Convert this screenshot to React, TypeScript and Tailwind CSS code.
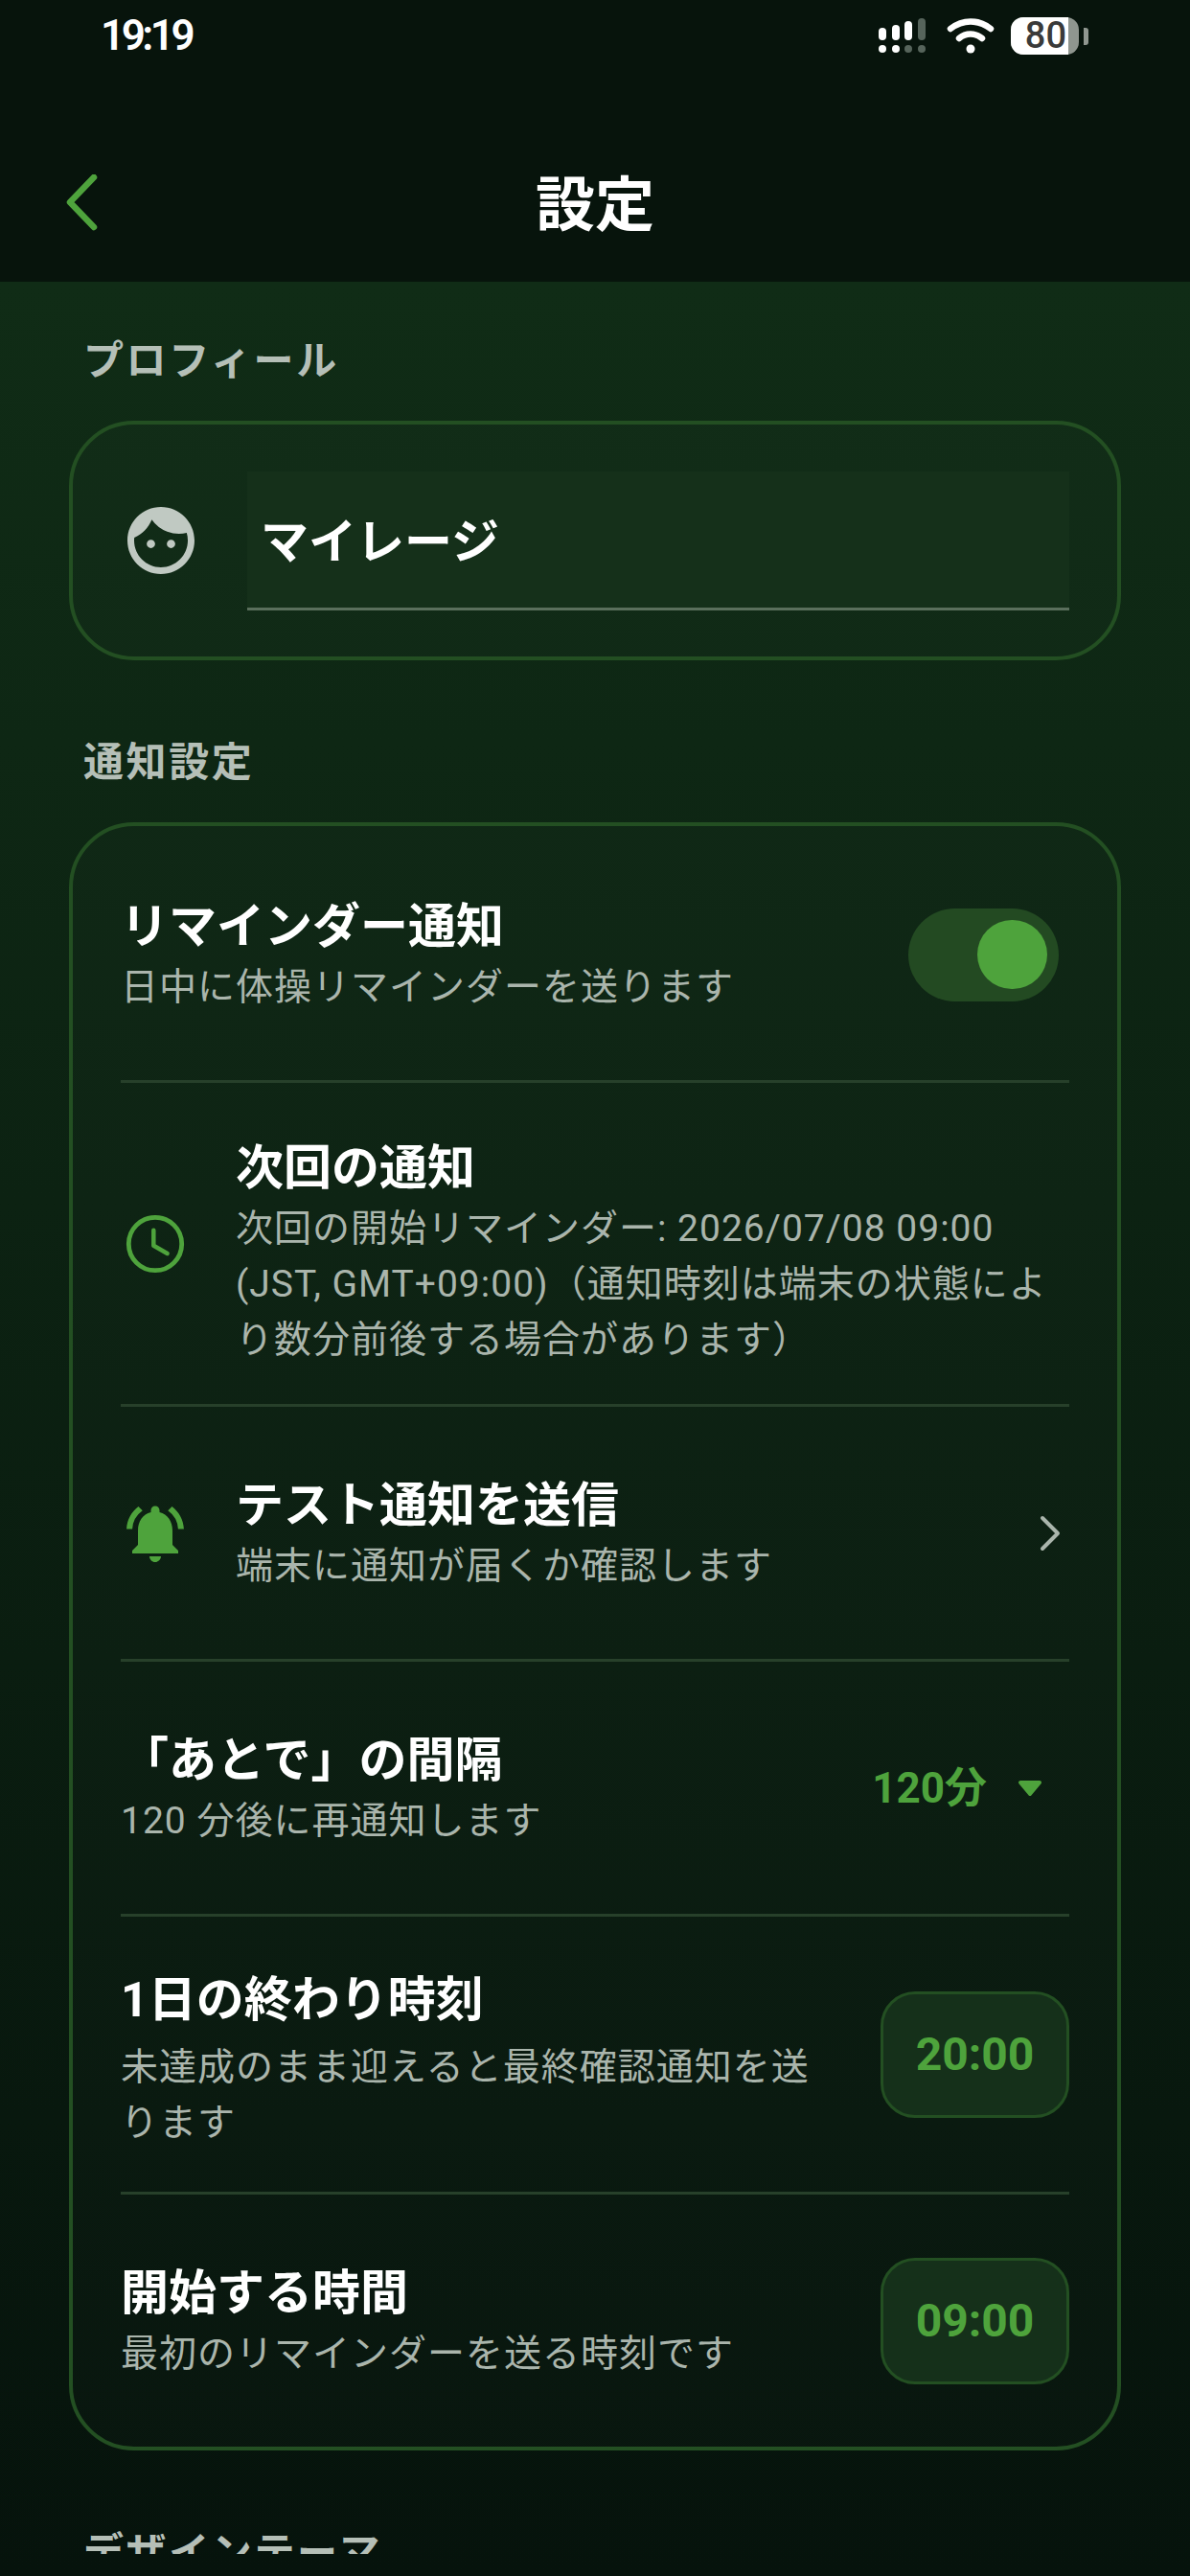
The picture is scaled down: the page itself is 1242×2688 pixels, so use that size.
import { MdFace, MdNotificationsActive } from "react-icons/md";

const green = "text-[#4ea33c]";

function SignalIcon() {
  const cols = [
    { x: 921, top: 30, on: true, dot: true },
    { x: 935, top: 27, on: true, dot: true },
    { x: 948, top: 23, on: true, dot: false },
    { x: 962, top: 20, on: false, dot: false },
  ];
  return (
    <svg width="50" height="38" viewBox="917 20 50 38">
      {cols.map((c) => (
        <g key={c.x}>
          <rect x={c.x - 4} y={c.top} width="8" height={43 - c.top} rx="4" fill={c.on ? "#fff" : "#56645b"} />
          <circle cx={c.x} cy="52" r="4" fill={c.dot ? "#fff" : "#56645b"} />
        </g>
      ))}
    </svg>
  );
}

function WifiIcon() {
  return (
    <svg width="50" height="38" viewBox="0 0 50 38" fill="none" stroke="#fff" strokeWidth="6.5" strokeLinecap="round">
      <path d="M4 11C17 1 33 1 46 11" />
      <path d="M13 21C20 15 30 15 37 21" />
      <circle cx="25" cy="32" r="4.5" fill="#fff" stroke="none" />
    </svg>
  );
}

function Battery() {
  return (
    <div className="flex items-center gap-[5px]">
      <div className="flex h-[39px] w-[71px] rounded-[13px] bg-[#8f968f]">
        <div className="flex w-[60px] items-center justify-end rounded-l-[13px] bg-white pr-[2px] text-[38px] leading-[39px] font-medium text-[#3a3a3a]">
          80
        </div>
      </div>
      <div className="h-[18px] w-[5px] rounded-r-[3px] bg-[#8f968f]" />
    </div>
  );
}

function StatusBar() {
  return (
    <div className="flex h-[130px] items-start justify-between pt-[18px] pr-[106px] pl-[105px] text-white">
      <span className="text-[44px] leading-[38px] font-semibold tracking-[-3.5px]">19:19</span>
      <div className="flex items-center">
        <SignalIcon />
        <div className="ml-[21px]">
          <WifiIcon />
        </div>
        <div className="ml-[17px]">
          <Battery />
        </div>
      </div>
    </div>
  );
}

function Header() {
  return (
    <header className="h-[294px] shrink-0 bg-[#07140c]">
      <StatusBar />
      <div className="flex h-[164px] items-center px-[68px]">
        <svg width="36" height="60" viewBox="0 0 36 60" fill="none" stroke="#4ea33c" strokeWidth="6.5" strokeLinecap="round" strokeLinejoin="round">
          <path d="M30 3L5 29L30 55" />
        </svg>
        <h1 className="flex-1 pt-[5px] text-center text-[62px] leading-[80px] font-bold text-white">設定</h1>
        <div className="w-[36px]" />
      </div>
    </header>
  );
}

function SectionLabel({ children }: { children: string }) {
  return (
    <h2 className="mb-[32px] px-[15px] text-[42px] leading-[60px] font-semibold tracking-[2.6px] text-[#b5bfb7]">
      {children}
    </h2>
  );
}

function Card({ children, className = "" }: { children: React.ReactNode; className?: string }) {
  return (
    <div className={`rounded-[68px] border-[4px] border-[#234f22] bg-white/[0.008] ${className}`}>
      {children}
    </div>
  );
}

function RowText({ title, sub, subClass = "" }: { title: string; sub: React.ReactNode; subClass?: string }) {
  return (
    <div className="min-w-0 flex-1">
      <div className="text-[50px] leading-[68px] font-bold text-white">{title}</div>
      <div className={`text-[39px] leading-[58px] tracking-[1px] text-[#aab5ac] ${subClass}`}>{sub}</div>
    </div>
  );
}

function Divider() {
  return <div className="h-[3px] bg-[#27402a]" />;
}

function TimeButton({ value }: { value: string }) {
  return (
    <button className="flex h-[132px] w-[197px] shrink-0 items-center justify-center rounded-[36px] border-[3px] border-[#234f22] bg-[#15301a] text-[48px] font-bold text-[#4ea33c]">
      {value}
    </button>
  );
}

function ClockIcon() {
  return (
    <svg width="72" height="72" viewBox="0 0 72 72" fill="none" stroke="#4ea33c" className="shrink-0">
      <circle cx="36" cy="36" r="27.7" strokeWidth="4.8" />
      <path d="M34.3 21.7V37.7L48.6 46" strokeWidth="4.5" strokeLinecap="round" strokeLinejoin="round" />
    </svg>
  );
}

export default function App() {
  return (
    <div className="flex h-[2688px] w-[1242px] flex-col overflow-hidden bg-[linear-gradient(180deg,#102c16_11%,#06130c_100%)] font-[Roboto,'Noto_Sans_CJK_JP',sans-serif]">
      <Header />
      <main className="h-[2371px] shrink-0 overflow-hidden px-[72px] pt-[53px]">
        <SectionLabel>プロフィール</SectionLabel>
        <Card className="mb-[77px] flex h-[250px] items-center px-[50px]">
          <MdFace size={84} className="shrink-0 text-[#c0c9c2]" />
          <div className="ml-[48px] flex h-[145px] flex-1 items-center border-b-[3px] border-[#5a6f5c] bg-[#15301a] pt-[8px] pl-[14px] text-[50px] font-bold text-white">
            マイレージ
          </div>
        </Card>

        <SectionLabel>通知設定</SectionLabel>
        <Card className="mb-[77px] px-[50px]">
          <div className="flex h-[265px] items-center pt-[3px]">
            <RowText title="リマインダー通知" sub="日中に体操リマインダーを送ります" />
            <div className="mr-[11px] flex h-[97px] w-[157px] shrink-0 items-center justify-end rounded-full bg-[#234a22] pr-[12px]">
              <div className="h-[72px] w-[73px] rounded-full bg-[#4ea33c]" />
            </div>
          </div>
          <Divider />
          <div className="flex h-[335px] items-center">
            <ClockIcon />
            <div className="ml-[48px] flex-1 pt-[16px]">
              <RowText
                title="次回の通知"
                sub="次回の開始リマインダー: 2026/07/08 09:00 (JST, GMT+09:00)（通知時刻は端末の状態により数分前後する場合があります）"
              />
            </div>
          </div>
          <Divider />
          <div className="flex h-[263px] items-center">
            <MdNotificationsActive size={72} className={`shrink-0 ${green}`} />
            <div className="ml-[48px] flex-1">
              <RowText title="テスト通知を送信" sub="端末に通知が届くか確認します" />
            </div>
            <svg width="24" height="40" viewBox="0 0 24 40" fill="none" stroke="#aab5ac" strokeWidth="4" strokeLinecap="round" strokeLinejoin="round" className="mr-[8px] shrink-0">
              <path d="M4 4L20 20L4 36" />
            </svg>
          </div>
          <Divider />
          <div className="flex h-[263px] items-center">
            <RowText title="「あとで」の間隔" sub="120 分後に再通知します" />
            <div className={`flex items-center text-[44px] font-bold ${green}`}>
              120分
              <svg width="26" height="18" viewBox="0 0 26 18" fill="#4ea33c" className="mr-[28px] ml-[32px]">
                <path d="M3 3H23L13 15Z" stroke="#4ea33c" strokeWidth="4" strokeLinejoin="round" />
              </svg>
            </div>
          </div>
          <Divider />
          <div className="flex h-[287px] items-center gap-[48px]">
            <div className="min-w-0 flex-1 pt-[10px]">
              <RowText title="1日の終わり時刻" sub="未達成のまま迎えると最終確認通知を送ります" subClass="mt-[7px]" />
            </div>
            <TimeButton value="20:00" />
          </div>
          <Divider />
          <div className="flex h-[263px] items-center gap-[48px]">
            <RowText title="開始する時間" sub="最初のリマインダーを送る時刻です" />
            <TimeButton value="09:00" />
          </div>
        </Card>

        <SectionLabel>デザインテーマ</SectionLabel>
      </main>
    </div>
  );
}
